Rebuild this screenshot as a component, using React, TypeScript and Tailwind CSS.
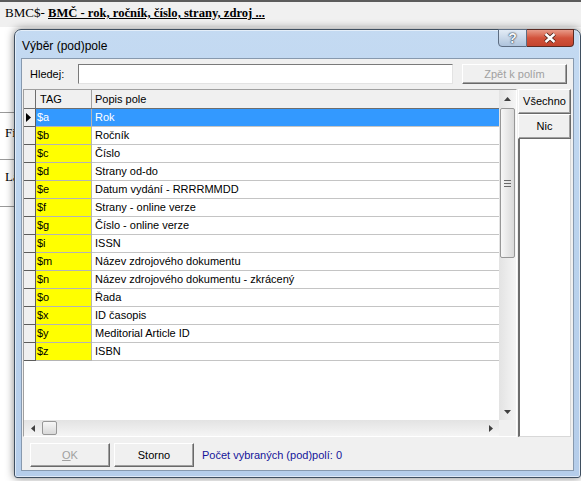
import React from 'react';

const rows: [string, string][] = [
  ['$a', 'Rok'],
  ['$b', 'Ročník'],
  ['$c', 'Číslo'],
  ['$d', 'Strany od-do'],
  ['$e', 'Datum vydání - RRRRMMDD'],
  ['$f', 'Strany - online verze'],
  ['$g', 'Číslo - online verze'],
  ['$i', 'ISSN'],
  ['$m', 'Název zdrojového dokumentu'],
  ['$n', 'Název zdrojového dokumentu - zkrácený'],
  ['$o', 'Řada'],
  ['$x', 'ID časopis'],
  ['$y', 'Meditorial Article ID'],
  ['$z', 'ISBN'],
];

// small solid arrow used by the scrollbars
const Arrow = ({ dir }: { dir: 'up' | 'down' | 'left' | 'right' }) => {
  const pts = {
    up: '0,4 3.5,0 7,4',
    down: '0,0 7,0 3.5,4',
    left: '4,0 4,7 0,3.5',
    right: '0,0 0,7 4,3.5',
  }[dir];
  const vertical = dir === 'up' || dir === 'down';
  return (
    <svg width={vertical ? 7 : 4} height={vertical ? 4 : 7} viewBox={vertical ? '0 0 7 4' : '0 0 4 7'}>
      <polygon points={pts} fill="#404040" />
    </svg>
  );
};

const Button = ({ children, className = '' }: { children: React.ReactNode; className?: string }) => (
  <div
    className={`flex items-center justify-center bg-[#f0f0f0] border border-t-white border-l-white border-r-[#696969] border-b-[#696969] shadow-[inset_-1px_-1px_0_#a0a0a0] ${className}`}
  >
    {children}
  </div>
);

const App: React.FC = () => {
  return (
    <div className="relative w-[581px] h-[481px] overflow-hidden bg-white font-['Liberation_Sans',Arial,sans-serif] text-[11px] text-black">
      {/* page behind the dialog */}
      <div className="h-[27px] border-t-2 border-[#5b5b5b] bg-[#f0f0f0] pl-[5px] pt-[3px] font-['Liberation_Serif',serif] text-[13px] leading-[16px]">
        BMC$- <span className="font-bold underline text-[12.6px]">BMČ - rok, ročník, číslo, strany, zdroj ...</span>
      </div>
      <div className="h-[85px]" />
      <div className="h-[47px] border-t border-[#9a9a9a] pl-[5px] pt-[12px] font-['Liberation_Serif',serif] text-[13px] leading-[16px]">Fi</div>
      <div className="h-[47px] border-t border-[#9a9a9a] pl-[5px] pt-[9px] font-['Liberation_Serif',serif] text-[13px] leading-[16px]">La</div>
      <div className="border-t border-[#9a9a9a]" />

      {/* dialog window */}
      <div className="absolute left-[14px] top-[29px] w-[567px] h-[449px] flex flex-col px-[6px] pb-[6px] rounded-t-[7px] rounded-b-[3px] border border-[#3f4f60] bg-linear-to-b from-[#c4daf2] via-[#b9d2ed] to-[#b5cdea] shadow-[0_0_8px_rgba(0,0,0,0.5),inset_0_0_0_1px_rgba(255,255,255,0.55)]">
        <div className="h-[28px] flex items-start">
          <div className="pl-[1px] pt-[8px] text-[12px] leading-[16px]">Výběr (pod)pole</div>
          <div className="ml-auto flex -mt-px">
            <div className="w-[29px] h-[18px] flex items-center justify-center rounded-bl-[4px] border border-[#5d6d82] bg-linear-to-b from-[#e3ecf6] via-[#c9d8e9] to-[#aec3dc] text-[14px] font-bold leading-none text-[#f4f7fb] [text-shadow:0_0_1px_#1f2a38,0_0_2px_#1f2a38]">
              ?
            </div>
            <div className="w-[47px] h-[18px] flex items-center justify-center rounded-br-[4px] border border-l-0 border-[#5b2a23] bg-linear-to-b from-[#e89a88] via-[#d2523b] to-[#c4442e]">
              <svg width="16" height="12" viewBox="0 0 16 12">
                <path d="M3.5 2 L12.5 10 M12.5 2 L3.5 10" stroke="#4a2019" strokeWidth="4.2" />
                <path d="M3.5 2 L12.5 10 M12.5 2 L3.5 10" stroke="#fff" strokeWidth="2.4" />
              </svg>
            </div>
          </div>
        </div>

        {/* client area */}
        <div className="flex-1 flex flex-col bg-[#f0f0f0] border border-[#8799ae]">
          {/* search row */}
          <div className="h-[30px] flex items-center pl-[8px]">
            <div className="w-[48px]">Hledej:</div>
            <div className="w-[375px] h-[20px] bg-white border border-t-[#7a7a7a] border-l-[#7a7a7a] border-r-[#e3e3e3] border-b-[#e3e3e3]" />
            <Button className="ml-[9px] w-[105px] h-[20px] text-[#a0a0a0]">Zpět k polím</Button>
          </div>

          {/* grid and side buttons */}
          <div className="h-[348px] flex">
            <div className="ml-px w-[494px] flex flex-col border border-t-[#a0a0a0] border-l-[#a0a0a0] border-r-white border-b-white">
              <div className="h-[330px] flex">
                <div className="w-[475px] bg-white flex flex-col">
                  <div className="h-[19px] flex bg-[#f0f0f0] border-b border-[#6d6d6d]">
                    <div className="w-[12px] border-r border-[#6d6d6d]" />
                    <div className="w-[56px] pl-[4px] leading-[18px] border-r border-[#a0a0a0]">TAG</div>
                    <div className="flex-1 pl-[3px] leading-[18px]">Popis pole</div>
                  </div>
                  {rows.map(([tag, label], i) => {
                    const sel = i === 0;
                    return (
                      <div key={tag} className="h-[18px] flex">
                        <div className="w-[12px] flex items-center pl-[2px] bg-[#f0f0f0] border-r border-b border-[#5d5d5d]">
                          {sel && (
                            <svg width="5" height="9" viewBox="0 0 5 9">
                              <polygon points="0,0 5,4.5 0,9" fill="#000" />
                            </svg>
                          )}
                        </div>
                        <div
                          className={`w-[56px] pl-px leading-[17px] border-r border-b border-[#b4b4b4] ${sel ? 'bg-[#3399ff] text-white' : 'bg-[#ffff00]'}`}
                        >
                          {tag}
                        </div>
                        <div
                          className={`flex-1 pl-[3px] leading-[17px] border-b border-[#c4c4c4] ${sel ? 'bg-[#3399ff] text-white' : ''}`}
                        >
                          {label}
                        </div>
                      </div>
                    );
                  })}
                </div>
                {/* vertical scrollbar */}
                <div className="w-[17px] flex flex-col bg-linear-to-r from-[#e3e3e3] to-[#f5f5f5]">
                  <div className="h-[17px] flex items-center justify-center">
                    <Arrow dir="up" />
                  </div>
                  <div className="mt-px mx-px h-[150px] flex flex-col items-center justify-center gap-[2px] rounded-[2px] border border-[#979797] bg-linear-to-r from-[#f7f7f7] to-[#d9d9d9]">
                    <div className="w-[7px] h-px bg-[#6a6a6a]" />
                    <div className="w-[7px] h-px bg-[#6a6a6a]" />
                    <div className="w-[7px] h-px bg-[#6a6a6a]" />
                  </div>
                  <div className="flex-1" />
                  <div className="h-[17px] flex items-center justify-center">
                    <Arrow dir="down" />
                  </div>
                </div>
              </div>
              {/* horizontal scrollbar */}
              <div className="h-[16px] flex">
                <div className="w-[475px] flex bg-linear-to-b from-[#e3e3e3] to-[#f5f5f5]">
                  <div className="w-[17px] flex items-center justify-center">
                    <Arrow dir="left" />
                  </div>
                  <div className="ml-px my-px w-[15px] rounded-[2px] border border-[#979797] bg-linear-to-b from-[#f7f7f7] to-[#d9d9d9]" />
                  <div className="flex-1" />
                  <div className="w-[17px] flex items-center justify-center">
                    <Arrow dir="right" />
                  </div>
                </div>
                <div className="w-[17px] bg-[#f0f0f0]" />
              </div>
            </div>

            <div className="ml-px w-[53px] flex flex-col">
              <Button className="h-[25px]">Všechno</Button>
              <Button className="h-[25px]">Nic</Button>
              <div className="flex-1 bg-white border-l-2 border-l-[#6d6d6d] border-r border-r-[#d8d8d8] border-b border-b-[#d8d8d8]" />
            </div>
          </div>

          {/* bottom row */}
          <div className="flex-1 flex items-start gap-[4px] pl-[8px] pt-[6px]">
            <Button className="w-[80px] h-[24px] text-[#a0a0a0]">
              <span className="underline">O</span>K
            </Button>
            <Button className="w-[80px] h-[24px]">Storno</Button>
            <div className="ml-[4px] h-[24px] flex items-center text-[#14149a]">Počet vybraných (pod)polí: 0</div>
          </div>
        </div>
      </div>
    </div>
  );
};

export default App;
